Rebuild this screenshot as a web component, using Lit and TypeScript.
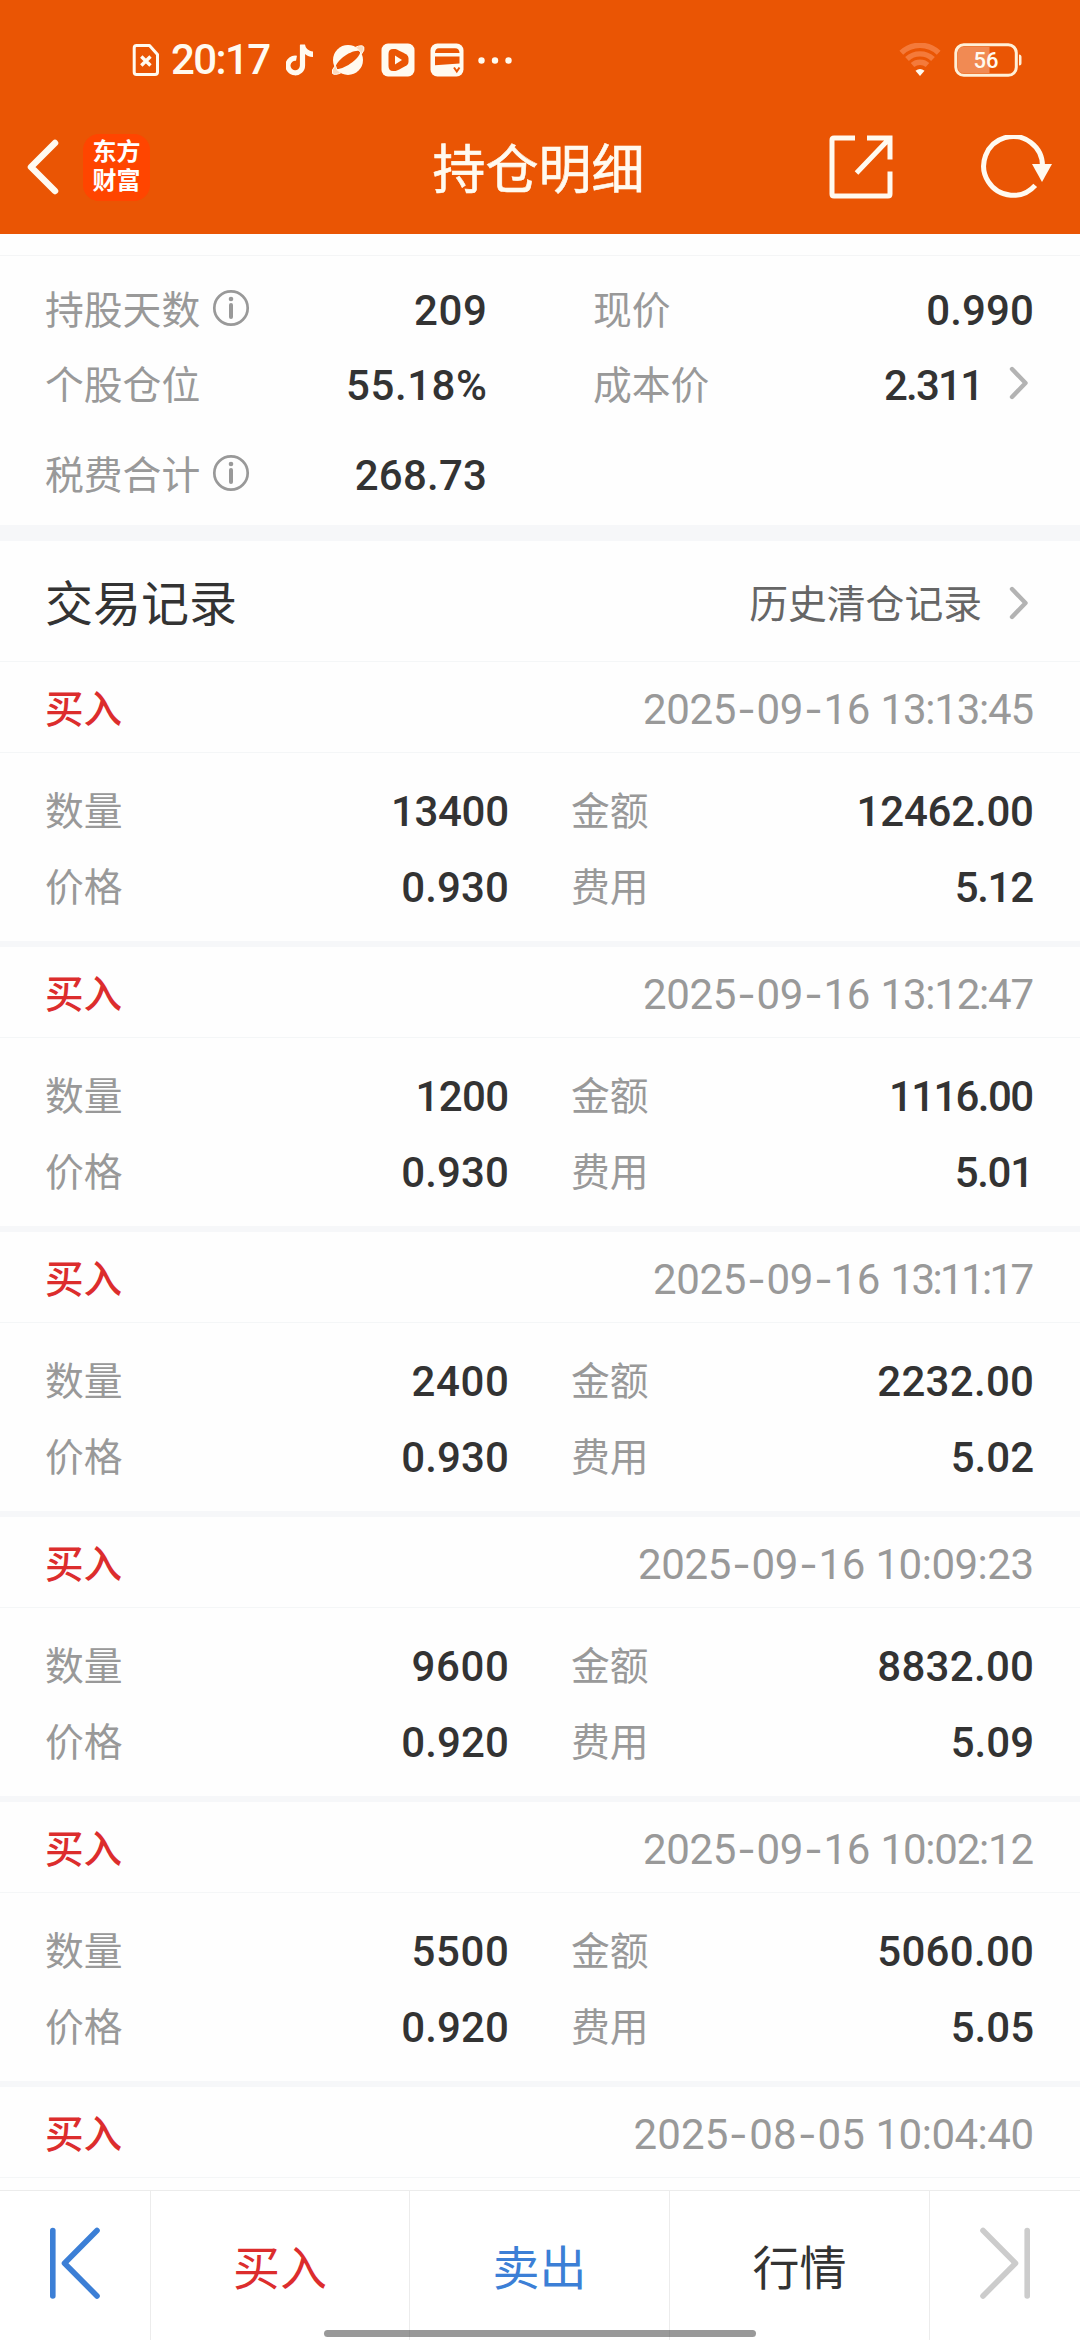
import { LitElement, html, css, svg, nothing } from "lit";
import { customElement, property } from "lit/decorators.js";

interface Trade {
  time: string;
  quantity: string;
  amount: string;
  price: string;
  fee: string;
}

const TRADES: Trade[] = [
  { time: "2025-09-16 13:13:45", quantity: "13400", amount: "12462.00", price: "0.930", fee: "5.12" },
  { time: "2025-09-16 13:12:47", quantity: "1200", amount: "1116.00", price: "0.930", fee: "5.01" },
  { time: "2025-09-16 13:11:17", quantity: "2400", amount: "2232.00", price: "0.930", fee: "5.02" },
  { time: "2025-09-16 10:09:23", quantity: "9600", amount: "8832.00", price: "0.920", fee: "5.09" },
  { time: "2025-09-16 10:02:12", quantity: "5500", amount: "5060.00", price: "0.920", fee: "5.05" },
  { time: "2025-08-05 10:04:40", quantity: "", amount: "", price: "", fee: "" },
];

const countOnes = (text: string) => text.split("1").length - 1;

/** A figure set with a narrow "1": tracking tightens with each one in the text. */
@customElement("num-text")
class NumText extends LitElement {
  static styles = css`
    :host { display: block; font-family: Roboto, "Liberation Sans", sans-serif; font-size: 42px; line-height: 48px; white-space: nowrap; font-weight: 500; color: #333; }
  `;
  @property() value = "";

  render() {
    const v = this.value;
    const gaps = Math.max(1, v.length - 1);
    const extra = gaps * 0.65 - countOnes(v) * 3.9 - (v.includes(".") ? 2 : 0) + (v.includes("%") ? 5.5 : 0);
    const ls = extra / gaps;
    return html`<div style="letter-spacing:${ls.toFixed(3)}px;margin-right:${(-ls).toFixed(3)}px">${v}</div>`;
  }
}

/** Date and time, with roomy hyphens and a tightly tracked clock part. */
@customElement("time-text")
class TimeText extends LitElement {
  static styles = css`
    :host { display: block; font-family: Roboto, "Liberation Sans", sans-serif; font-size: 42px; line-height: 48px; white-space: pre; color: #999; }
    .dash { display: inline-block; padding: 0 4.6px; transform: scaleX(1.3); }
    .gap { letter-spacing: 0.2px; }
  `;
  @property() value = "";

  render() {
    const [day, clock] = this.value.split(" ");
    const dayLs = (0.8 - countOnes(day) * 4) / 9;
    const clockLs = (1.5 - countOnes(clock) * 5) / 7;
    const parts = day.split("-");
    return html`<div style="margin-right:${(-clockLs).toFixed(3)}px"><span style="letter-spacing:${dayLs.toFixed(3)}px">${parts[0]}<span class="dash">-</span>${parts[1]}<span class="dash">-</span>${parts[2]}</span><span class="gap"> </span><span style="letter-spacing:${clockLs.toFixed(3)}px">${clock}</span></div>`;
  }
}

const chevron = html`<svg class="chev" width="20" height="34" viewBox="0 0 20 34">
  <path d="M3 3 L16.5 17 L3 31" fill="none" stroke="#b3b3b3" stroke-width="4.4" stroke-linecap="round" stroke-linejoin="round" />
</svg>`;

const info = html`<svg class="info" width="38" height="38" viewBox="0 0 38 38">
  <circle cx="19" cy="19" r="16.7" fill="none" stroke="#999" stroke-width="2.7" />
  <circle cx="19" cy="10" r="2.3" fill="#999" />
  <path d="M19 16 V28" stroke="#999" stroke-width="4" stroke-linecap="round" />
</svg>`;

@customElement("status-bar")
class StatusBar extends LitElement {
  static styles = css`
    :host { display: flex; justify-content: space-between; align-items: center; height: 120px; padding: 0 58px 0 132px; box-sizing: border-box; color: #fffaf0; }
    svg { display: block; }
    .side { display: flex; align-items: center; }
    .clock { font: 500 42px/48px Roboto, sans-serif; letter-spacing: -1.6px; margin-left: 11px; width: 102px; white-space: nowrap; }
    .note { margin-left: 13px; }
    .planet { margin-left: 17px; }
    .play { margin-left: 16px; }
    .card { margin-left: 15px; }
    .dots { margin-left: 13px; }
    .battery { margin-left: 13px; }
    .level { font: 500 22px Roboto, sans-serif; }
  `;
  render() {
    return html`
      <div class="side">
        <svg width="28" height="34" viewBox="0 0 28 34" fill="none" stroke="#fffaf0">
          <path d="M4 2.5 H17.5 L25.5 11.5 V29 Q25.5 31.5 23 31.5 H4.5 Q2.2 31.5 2.2 29 V5 Q2.2 2.5 4.5 2.5 Z" stroke-width="3" stroke-linejoin="round" />
          <path d="M9.3 13.5 L18.5 22.5 M18.5 13.5 L9.3 22.5" stroke-width="3.4" />
        </svg>
        <div class="clock">20:17</div>
        <svg class="note" width="28" height="32" viewBox="0 0 28 32">
          <path d="M16.5 1 V21.5 A7.300 7.300 0 1 1 10.500 14.300" fill="none" stroke="#fffaf0" stroke-width="5.200" />
          <path d="M14 0.5 H19 C19.5 4.5 22.5 7 27 7.5 V13 C23 13 20.5 11.5 19 10 Z" fill="#fffaf0" />
        </svg>
        <svg class="planet" width="34" height="34" viewBox="0 0 34 34">
          <circle cx="17" cy="17" r="15" fill="#fffaf0" />
          <path d="M4.500 26 C3 18.500 21 5.500 29 8 C31 14 12.500 27.500 4.500 26 Z" fill="#ea5504" />
          <path d="M1.500 30.500 Q0 27 4.500 22.500 Q5 27.500 9.500 30 Q4 32.500 1.500 30.500 Z M24.500 4.300 Q31 1.300 32.800 4 Q34 7 30.500 11 Q28.500 7 24.500 4.300 Z" fill="#fbd9bd" stroke="#fffaf0" stroke-width="1" />
        </svg>
        <svg class="play" width="34" height="34" viewBox="0 0 34 34">
          <rect x="0.500" y="0.500" width="33" height="33" rx="6.500" fill="#fffaf0" />
          <path d="M7.500 11 Q7.500 6 12 6 H14.500 Q16.500 6.500 25.500 11.500 Q27.500 13 27.500 15 V19 Q27.500 21 25.500 22.500 Q16.500 27.500 14.500 28 H12 Q7.500 28 7.500 23 Z" fill="#ea5504" />
          <path d="M14 12.500 L21 17 L14 21.500 Z" fill="#fffaf0" />
        </svg>
        <svg class="card" width="34" height="34" viewBox="0 0 34 34">
          <rect x="0.500" y="0.500" width="33" height="33" rx="7" fill="#fffaf0" />
          <path d="M5 10 Q5 5.300 9 5.300 H25 Q29.500 5.300 29.500 10 Z M5 13.500 H29.500 V20.500 L5 22.300 Z" fill="#ea5504" />
          <path d="M24 24.500 L26.800 28.500 L29.500 24.500" fill="none" stroke="#ea5504" stroke-width="2" />
        </svg>
        <svg class="dots" width="36" height="10" viewBox="0 0 36 10" fill="#fffaf0">
          <circle cx="4.500" cy="5.500" r="3.200" /><circle cx="18" cy="5.500" r="3.200" /><circle cx="31.500" cy="5.500" r="3.200" />
        </svg>
      </div>
      <div class="side">
        <svg width="42" height="34" viewBox="0 0 42 34" fill="none" stroke="#f47a3a" stroke-width="5.400">
          <path d="M2.300 9.800 A27 27 0 0 1 39.700 9.800" />
          <path d="M8 16 A19 19 0 0 1 34 16" />
          <path d="M13.500 22 A11.500 11.500 0 0 1 28.500 22" />
          <path d="M21 33 L16.500 27.800 Q21 24.300 25.500 27.800 Z" fill="#fffaf0" stroke="none" />
        </svg>
        <svg class="battery" width="68" height="34" viewBox="0 0 68 34">
          <path d="M35.500 4 V30 H9 Q4 30 4 25 V9 Q4 4 9 4 Z" fill="#f18a53" />
          <rect x="1.800" y="1.800" width="60.500" height="30.500" rx="8" fill="none" stroke="#fff0d8" stroke-width="3" />
          <path d="M65 11.500 Q67.500 11.500 67.500 14 V20 Q67.500 22.500 65 22.500 Z" fill="#fff0d8" />
          <text class="level" x="32" y="24.800" text-anchor="middle" fill="#fffaf0">56</text>
        </svg>
      </div>`;
  }
}

@customElement("nav-header")
class NavHeader extends LitElement {
  static styles = css`
    :host { display: grid; grid-template-columns: 1fr auto 1fr; align-items: center; height: 114px; padding: 0 27px 20px 24px; box-sizing: border-box; color: #fffaf0; font-family: "Noto Sans CJK SC", sans-serif; }
    svg { display: block; }
    .left { display: flex; align-items: center; }
    .logo { width: 67px; height: 67px; box-sizing: border-box; margin-left: 22px; border-radius: 16px; background: #ff4500; font-size: 24px; font-weight: 700; line-height: 29px; text-align: center; padding-top: 1px; color: #fff; }
    .title { font-size: 53px; line-height: 60px; padding-bottom: 2px; -webkit-text-stroke: 0.6px #fffaf0; }
    .right { display: flex; justify-content: flex-end; align-items: center; gap: 86px; }
  `;
  render() {
    return html`
      <div class="left">
        <svg width="37" height="62" viewBox="0 0 37 62"><path d="M31 7 L7 31 L31 55" fill="none" stroke="#fffaf0" stroke-width="6.500" stroke-linecap="round" stroke-linejoin="round" /></svg>
        <div class="logo"><div>东方</div><div>财富</div></div>
      </div>
      <div class="title">持仓明细</div>
      <div class="right">
        <svg width="64" height="64" viewBox="0 0 64 64" fill="none" stroke="#fffaf0" stroke-width="5">
          <path d="M26 3 H5 Q3 3 3 5 V59 Q3 61 5 61 H59 Q61 61 61 59 V36.500" />
          <path d="M38 3 H61 V24.500 M60 4 L27.500 38" />
        </svg>
        <svg width="74" height="64" viewBox="0 0 74 64">
          <path d="M56.200 50.300 A29.400 29.400 0 1 1 63.500 31" fill="none" stroke="#fffaf0" stroke-width="5" />
          <path d="M53 29 H73 L63 47 Z" fill="#fffaf0" />
        </svg>
      </div>`;
  }
}

@customElement("summary-panel")
class SummaryPanel extends LitElement {
  static styles = css`
    :host { display: flex; flex-direction: column; height: 270px; box-sizing: border-box; padding: 17px 46px 0 45px; border-top: 1px solid #f4f5f6; font-family: "Noto Sans CJK SC", sans-serif; }
    .row { display: grid; grid-template-columns: 442px 106px 441px; align-items: center; height: 75px; }
    .gap { margin-top: 15px; }
    .cell { display: flex; align-items: center; justify-content: space-between; }
    .second { grid-column: 3; }
    .name { display: flex; align-items: center; gap: 12px; font-size: 38.800px; line-height: 44px; color: #999; }
    .label { padding-bottom: 7px; }
    .end { display: flex; align-items: center; gap: 25px; }
    .info { display: block; margin-bottom: 5px; }
    .chev { display: block; margin: 0 5px 5px 0; }
  `;
  private cell(label: string, value: string, opts: { info?: boolean; link?: boolean; second?: boolean } = {}) {
    return html`<div class="cell ${opts.second ? "second" : ""}">
      <div class="name"><div class="label">${label}</div>${opts.info ? info : nothing}</div>
      <div class="end"><num-text .value=${value}></num-text>${opts.link ? chevron : nothing}</div>
    </div>`;
  }
  render() {
    return html`
      <div class="row">${this.cell("持股天数", "209", { info: true })}${this.cell("现价", "0.990", { second: true })}</div>
      <div class="row">${this.cell("个股仓位", "55.18%")}${this.cell("成本价", "2.311", { second: true, link: true })}</div>
      <div class="row gap">${this.cell("税费合计", "268.73", { info: true })}</div>`;
  }
}

@customElement("trade-record")
class TradeRecord extends LitElement {
  static styles = css`
    :host { display: block; font-family: "Noto Sans CJK SC", sans-serif; }
    .head { display: flex; justify-content: space-between; align-items: center; height: 91px; box-sizing: border-box; border-bottom: 1px solid #f4f6f7; padding: 5px 46px 0 45px; }
    .side { font-size: 38.600px; line-height: 44px; font-weight: 500; color: #dc2d2d; padding-bottom: 7px; }
    .body { display: grid; grid-template-columns: 464px 463px; column-gap: 62px; grid-auto-rows: 76px; height: 188px; box-sizing: border-box; padding: 21px 46px 0 45px; }
    .cell { display: flex; justify-content: space-between; align-items: center; }
    .label { font-size: 38.800px; line-height: 44px; color: #999; padding-bottom: 8px; }
    .band { height: 6px; background: #f6f7f9; }
  `;
  @property({ attribute: false }) trade!: Trade;

  render() {
    const t = this.trade;
    const cell = (label: string, value: string) =>
      html`<div class="cell"><div class="label">${label}</div><num-text .value=${value}></num-text></div>`;
    return html`
      <div class="head"><div class="side">买入</div><time-text .value=${t.time}></time-text></div>
      ${t.quantity
        ? html`<div class="body">
              ${cell("数量", t.quantity)}${cell("金额", t.amount)}${cell("价格", t.price)}${cell("费用", t.fee)}
            </div>
            <div class="band"></div>`
        : nothing}`;
  }
}

@customElement("action-bar")
class ActionBar extends LitElement {
  static styles = css`
    :host { display: grid; grid-template-columns: 151px 259px 260px 260px 150px; height: 150px; box-sizing: border-box; border-top: 1px solid #ececec; background: #fff; font-family: "Noto Sans CJK SC", sans-serif; font-size: 47px; line-height: 60px; }
    .item { display: flex; align-items: center; justify-content: center; border-right: 1px solid #ececec; }
    .item:last-child { border-right: 0; }
    .buy { color: #dc2d2d; }
    .sell { color: #3c7fd6; }
    .quote { color: #333; }
    .icon { display: block; margin-bottom: 5px; }
    .text { padding-bottom: 1px; }
  `;
  private arrow(color: string, flip: boolean) {
    return html`<svg class="icon" width="54" height="74" viewBox="0 0 54 74">
      ${svg`<g transform=${flip ? "translate(54 0) scale(-1 1)" : ""} fill="none" stroke=${color} stroke-width="5.600" stroke-linecap="round" stroke-linejoin="round">
        <path d="M4.800 4.500 V70" /><path d="M49 4.500 L16.500 37.200 L49 70" />
      </g>`}
    </svg>`;
  }
  render() {
    return html`
      <div class="item">${this.arrow("#3c7fd6", false)}</div>
      <div class="item buy"><span class="text">买入</span></div>
      <div class="item sell"><span class="text">卖出</span></div>
      <div class="item quote"><span class="text">行情</span></div>
      <div class="item">${this.arrow("#cccccc", true)}</div>`;
  }
}

@customElement("app-root")
class AppRoot extends LitElement {
  static styles = css`
    :host { display: flex; flex-direction: column; position: relative; width: 1080px; height: 2340px; overflow: hidden; background: #fefefe; font-family: "Noto Sans CJK SC", sans-serif; }
    .top { background: #ea5504; }
    .spacer { height: 21px; flex: none; }
    .band { height: 16px; background: #f6f7f9; flex: none; }
    .section { display: flex; flex: none; justify-content: space-between; align-items: center; height: 121px; box-sizing: border-box; border-bottom: 1px solid #f4f6f7; padding: 0 51px 0 45px; }
    .heading { font-size: 48px; line-height: 60px; color: #333; padding-bottom: 2px; }
    .history { display: flex; align-items: center; gap: 27px; font-size: 38.800px; line-height: 44px; color: #666; }
    .chev { display: block; margin-top: 4px; }
    .list { flex: 1; min-height: 0; overflow: hidden; }
    .home { position: absolute; left: 324px; bottom: 3px; width: 432px; height: 7px; border-radius: 3.500px; background: rgba(70, 70, 70, 0.55); }
  `;
  render() {
    return html`
      <div class="top"><status-bar></status-bar><nav-header></nav-header></div>
      <div class="spacer"></div>
      <summary-panel></summary-panel>
      <div class="band"></div>
      <div class="section">
        <div class="heading">交易记录</div>
        <div class="history"><span>历史清仓记录</span>${chevron}</div>
      </div>
      <div class="list">${TRADES.map((t) => html`<trade-record .trade=${t}></trade-record>`)}</div>
      <action-bar></action-bar>
      <div class="home"></div>`;
  }
}
